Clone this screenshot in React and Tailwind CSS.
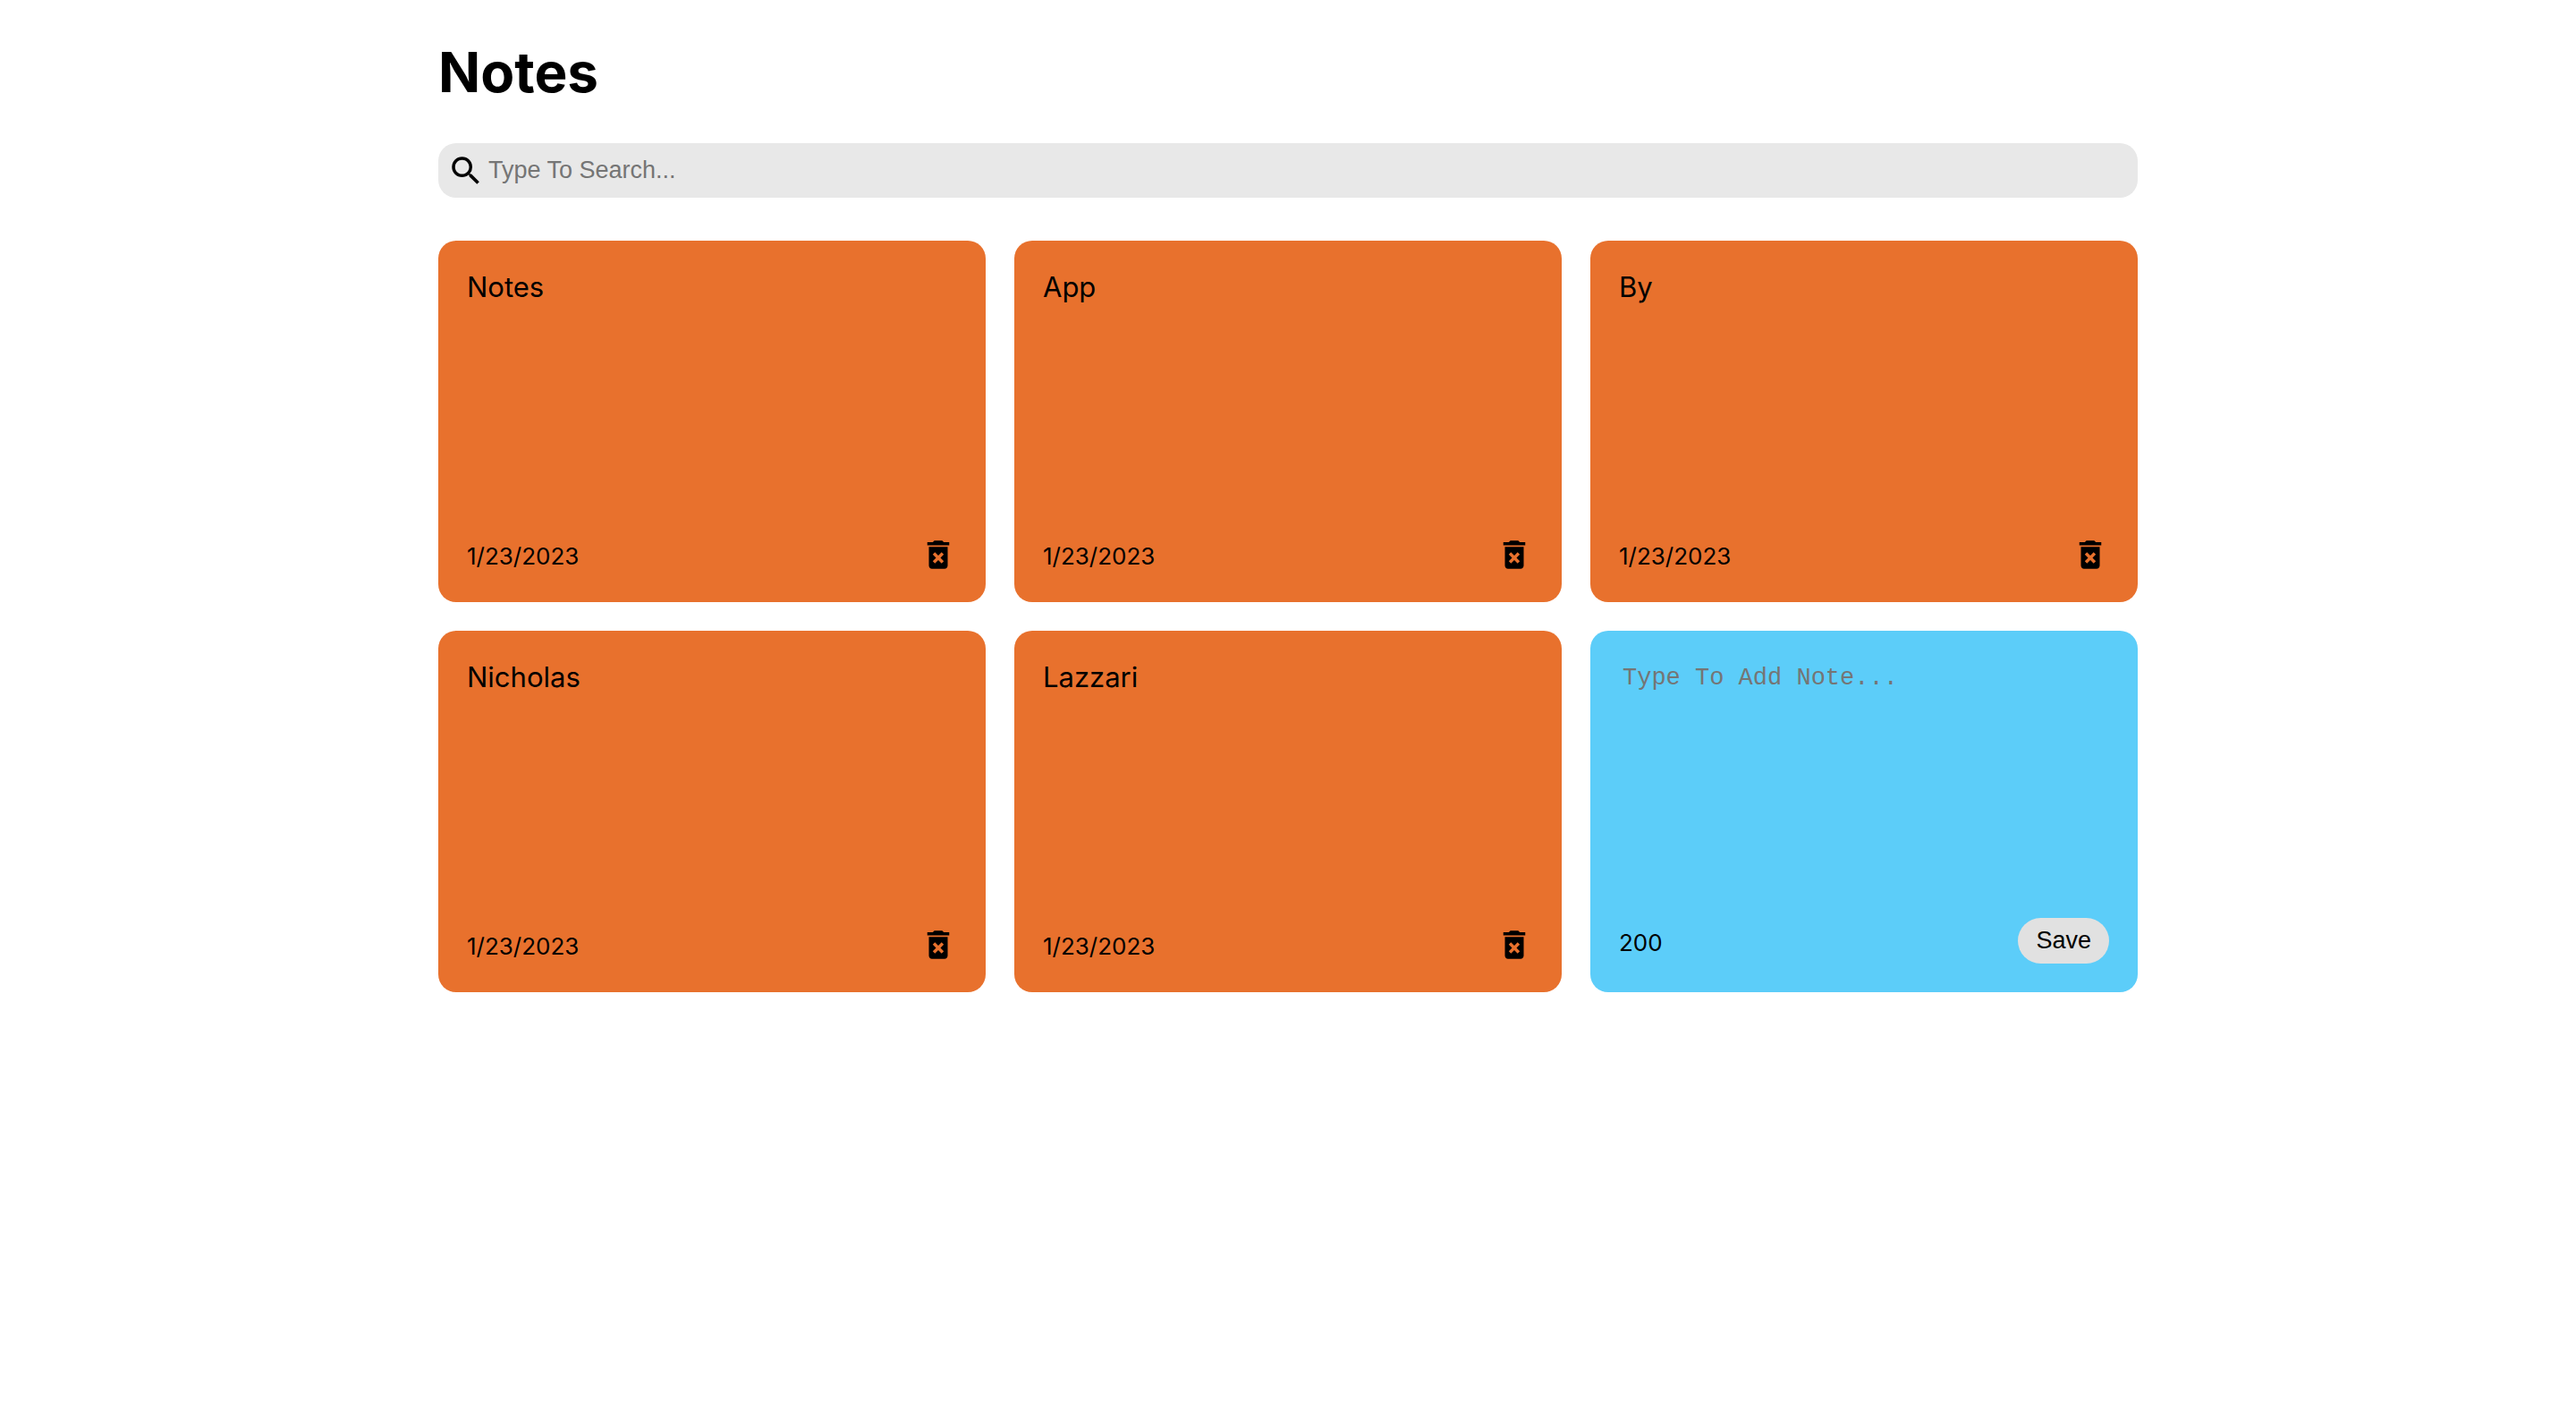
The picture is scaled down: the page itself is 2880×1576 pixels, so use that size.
import { useState } from "react";
import { MdDeleteForever, MdSearch } from "react-icons/md";

const CHARACTER_LIMIT = 200;

const initialNotes = [
  { id: 1, text: "Notes", date: "1/23/2023" },
  { id: 2, text: "App", date: "1/23/2023" },
  { id: 3, text: "By", date: "1/23/2023" },
  { id: 4, text: "Nicholas", date: "1/23/2023" },
  { id: 5, text: "Lazzari", date: "1/23/2023" },
];

function Search({ value, onChange }) {
  return (
    <label className="flex items-center rounded-[20px] bg-[#e8e8e8] px-2.5 py-2">
      <MdSearch className="size-[42px] shrink-0" aria-hidden="true" />
      <input
        type="text"
        aria-label="Search notes"
        placeholder="Type To Search..."
        value={value}
        onChange={(e) => onChange(e.target.value)}
        className="h-[45px] min-w-0 flex-1 bg-transparent px-1 font-['Liberation_Sans',sans-serif] text-[27px] outline-none placeholder:text-[#757575]"
      />
    </label>
  );
}

function Note({ note, onDelete }) {
  return (
    <li className="flex min-h-[404px] flex-col justify-between rounded-[20px] bg-[#e8712d] p-8">
      <p className="text-[31px] leading-10 break-words whitespace-pre-wrap">{note.text}</p>
      <div className="flex items-center justify-between">
        <time className="pt-1 text-[26px] leading-8">{note.date}</time>
        <button type="button" aria-label={`Delete note ${note.text}`} onClick={() => onDelete(note.id)}>
          <MdDeleteForever className="size-[42px]" aria-hidden="true" />
        </button>
      </div>
    </li>
  );
}

function AddNote({ onAdd }) {
  const [text, setText] = useState("");

  function submit(e) {
    e.preventDefault();
    if (!text.trim()) return;
    onAdd(text);
    setText("");
  }

  return (
    <li className="flex min-h-[404px] rounded-[20px] bg-[#5ccdf9] p-8">
      <form onSubmit={submit} className="flex flex-1 flex-col">
        <textarea
          aria-label="New note"
          placeholder="Type To Add Note..."
          value={text}
          maxLength={CHARACTER_LIMIT}
          onChange={(e) => setText(e.target.value)}
          className="w-full flex-1 resize-none bg-transparent p-1 font-['Liberation_Mono',monospace] text-[27px] leading-[34px] outline-none placeholder:text-[#757575]"
        />
        <div className="flex items-center justify-between">
          <span className="pt-1 text-[26px] leading-8">{CHARACTER_LIMIT - text.length}</span>
          <button
            type="submit"
            className="rounded-full bg-[#e1e1e1] px-5 py-2.5 font-['Liberation_Sans',sans-serif] text-[27px] leading-[31px]"
          >
            Save
          </button>
        </div>
      </form>
    </li>
  );
}

export default function App() {
  const [notes, setNotes] = useState(initialNotes);
  const [query, setQuery] = useState("");

  const visible = notes.filter((n) => n.text.toLowerCase().includes(query.toLowerCase()));

  return (
    <main className="mx-auto max-w-[1900px] pt-10 font-['Inter',sans-serif] text-black">
      <h1 className="mb-[38px] text-[62px] leading-[82px] font-bold">Notes</h1>
      <Search value={query} onChange={setQuery} />
      <ul className="mt-12 grid grid-cols-3 gap-8">
        {visible.map((note) => (
          <Note key={note.id} note={note} onDelete={(id) => setNotes(notes.filter((n) => n.id !== id))} />
        ))}
        <AddNote
          onAdd={(text) =>
            setNotes([...notes, { id: Date.now(), text, date: new Date().toLocaleDateString("en-US") }])
          }
        />
      </ul>
    </main>
  );
}
